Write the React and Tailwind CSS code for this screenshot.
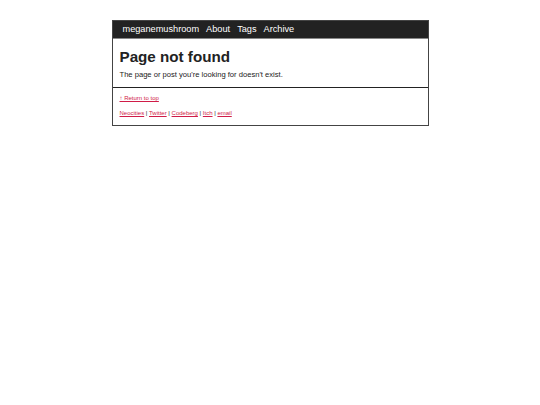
import React from 'react'

const App = () => {
  return (
    <div className="min-h-screen bg-white pt-5 font-['Liberation_Sans',Arial,sans-serif] text-[#222]">
      <div className="mx-auto w-[317px] border border-[#444]">
        <nav className="flex items-center gap-[7px] bg-[#222] h-[17px] pl-[10px] text-[9.2px] text-white">
          <a href="#">meganemushroom</a>
          <a href="#">About</a>
          <a href="#">Tags</a>
          <a href="#">Archive</a>
        </nav>
        <div className="border-t border-[#888] px-[7px] pt-[9px] pb-[7px]">
          <h1 className="text-[15.2px] font-bold leading-[17px]">Page not found</h1>
          <p className="mt-[4px] text-[7.6px] leading-[11px]">The page or post you're looking for doesn't exist.</p>
        </div>
        <footer className="border-t border-[#222] px-[7px] pt-[6px] pb-[8px] text-[6px] leading-[8px]">
          <a href="#" className="text-[#d01c48] underline">↑ Return to top</a>
          <p className="mt-[7px]">
            <a href="#" className="text-[#d01c48] underline">Neocities</a> |{' '}
            <a href="#" className="text-[#d01c48] underline">Twitter</a> |{' '}
            <a href="#" className="text-[#d01c48] underline">Codeberg</a> |{' '}
            <a href="#" className="text-[#d01c48] underline">Itch</a> |{' '}
            <a href="#" className="text-[#d01c48] underline">email</a>
          </p>
        </footer>
      </div>
    </div>
  )
}

export default App
